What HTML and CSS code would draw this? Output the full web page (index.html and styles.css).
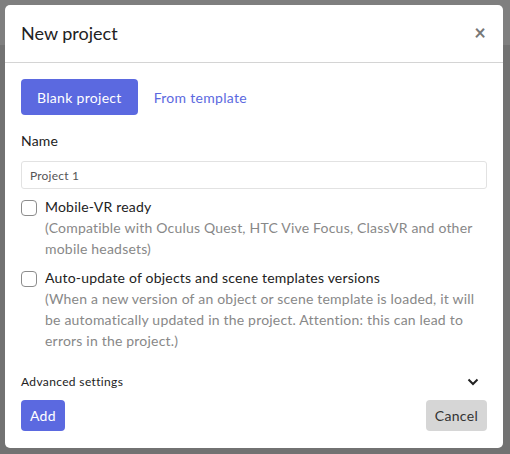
FILE: index.html
```html
<!DOCTYPE html>
<html>
<head>
<meta charset="utf-8">
<link rel="stylesheet" href="styles.css">
</head>
<body>
<div class="backdrop">
  <div class="modal">
    <div class="modal-header">
      <h1 class="modal-title">New project</h1>
      <span class="close">&times;</span>
    </div>
    <div class="modal-body">
      <div class="tabs">
        <button class="tab tab-active">Blank project</button>
        <button class="tab tab-link">From template</button>
      </div>
      <label class="field-label">Name</label>
      <div class="input">Project 1</div>
      <div class="check">
        <span class="box"></span>
        <div class="check-text">
          <div class="check-title">Mobile-VR ready</div>
          <div class="check-help">(Compatible with Oculus Quest, HTC Vive Focus, ClassVR and other mobile headsets)</div>
        </div>
      </div>
      <div class="check">
        <span class="box"></span>
        <div class="check-text">
          <div class="check-title">Auto-update of objects and scene templates versions</div>
          <div class="check-help">(When a new version of an object or scene template is loaded, it will be automatically updated in the project. Attention: this can lead to errors in the project.)</div>
        </div>
      </div>
      <div class="advanced">
        <span>Advanced settings</span>
        <svg class="chevron" width="12" height="8" viewBox="0 0 12 8"><path d="M1.5 1.5 L6 6 L10.5 1.5" fill="none" stroke="#222" stroke-width="2"/></svg>
      </div>
      <div class="footer">
        <button class="btn btn-primary">Add</button>
        <button class="btn btn-secondary">Cancel</button>
      </div>
    </div>
  </div>
</div>
</body>
</html>
```
FILE: styles.css
```css
* { box-sizing: border-box; }
html, body { margin: 0; padding: 0; }
body {
  width: 510px;
  height: 454px;
  background: linear-gradient(#7f7f7f 0, #7f7f7f 45px, #727272 45px);
  font-family: "Lato", "Open Sans", sans-serif;
  color: #222;
  letter-spacing: 0.2px;
  overflow: hidden;
}
.backdrop { padding: 5px 7px 6px 5px; }
.modal {
  background: #fff;
  border-radius: 5px;
  width: 498px;
  height: 443px;
  display: flex;
  flex-direction: column;
}
.modal-header {
  height: 58px;
  border-bottom: 1px solid #d4d4d4;
  display: flex;
  align-items: center;
  justify-content: space-between;
  padding: 0 17px 0 16px;
}
.modal-title {
  margin: 0;
  font-size: 18px;
  font-weight: 400;
  color: #222;
  letter-spacing: 0;
  position: relative;
  top: -1px;
}
.close {
  font-size: 20px;
  font-weight: 700;
  color: #777;
  line-height: 1;
  position: relative;
  top: -2px;
}
.modal-body {
  padding: 16px 16px 0 16px;
  display: flex;
  flex-direction: column;
}
.tabs { display: flex; gap: 0; }
.tab {
  font-family: inherit;
  font-size: 14px;
  letter-spacing: 0.3px;
  border: none;
  border-radius: 4px;
  height: 36px;
  padding: 0 16px;
  cursor: pointer;
}
.tab-active { background: #5b69e0; color: #fff; }
.tab-link { background: transparent; color: #5b69e0; }
.field-label {
  display: block;
  margin-top: 18px;
  font-size: 14px;
  line-height: 16px;
}
.input {
  margin-top: 12px;
  height: 28px;
  border: 1px solid #e2e2e2;
  border-radius: 3px;
  font-size: 12px;
  color: #555;
  padding: 0 8px;
  display: flex;
  align-items: center;
}
.check {
  display: flex;
  gap: 8px;
  margin-top: 7px;
}
.check + .check { margin-top: 8px; }
.box {
  flex: none;
  width: 16px;
  height: 16px;
  border: 1px solid #8c8c8c;
  border-radius: 4px;
  margin-top: 4px;
}
.check-text { font-size: 14px; line-height: 21px; }
.check-title { color: #222; }
.check-help { color: #888; }
.advanced {
  margin-top: 23px;
  display: flex;
  justify-content: space-between;
  align-items: center;
  font-size: 12px;
  letter-spacing: 0.35px;
  padding-right: 8px;
}
.footer {
  display: flex;
  justify-content: space-between;
  margin-top: 11px;
}
.btn {
  font-family: inherit;
  font-size: 14px;
  letter-spacing: 0.3px;
  border: none;
  border-radius: 4px;
  height: 31px;
  padding: 0 9px;
}
.btn-primary { background: #5b69e0; color: #fff; }
.btn-secondary { background: #d6d6d6; color: #333; }
```
